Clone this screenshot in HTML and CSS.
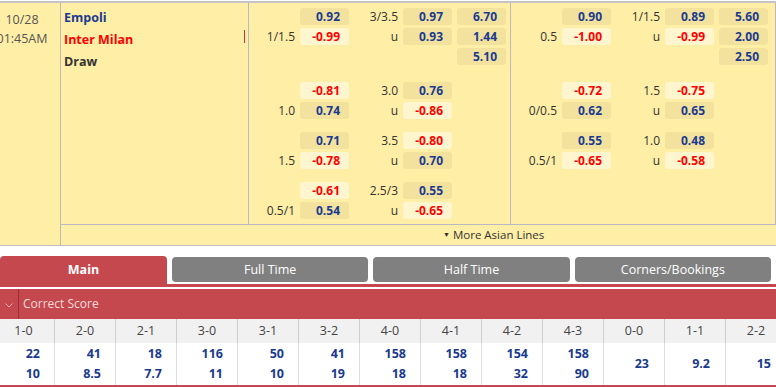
FILE: index.html
```html
<!DOCTYPE html>
<html>
<head>
    <title>Empoli vs Inter Milan - Odds</title>
    <link rel="stylesheet" href="styles.css">
</head>
<body>
    <div class="match">
        <div class="date">
            <span>10/28</span>
            <span>01:45AM</span>
        </div>
        <div class="markets">
            <div class="lines">
                <div class="teams">
                    <div class="team home">Empoli</div>
                    <div class="team away">Inter Milan<span class="mark"></span></div>
                    <div class="team draw">Draw</div>
                </div>

                <div class="block">
                    <div class="group first">
                        <span class="hdp"></span><span class="odd">0.92</span><span class="hdp">3/3.5</span><span class="odd">0.97</span><span class="odd x12">6.70</span>
                        <span class="hdp">1/1.5</span><span class="odd neg">-0.99</span><span class="hdp">u</span><span class="odd">0.93</span><span class="odd x12">1.44</span>
                        <span></span><span></span><span></span><span></span><span class="odd x12">5.10</span>
                    </div>
                    <div class="group">
                        <span class="hdp"></span><span class="odd neg">-0.81</span><span class="hdp">3.0</span><span class="odd">0.76</span><span></span>
                        <span class="hdp">1.0</span><span class="odd">0.74</span><span class="hdp">u</span><span class="odd neg">-0.86</span><span></span>
                    </div>
                    <div class="group">
                        <span class="hdp"></span><span class="odd">0.71</span><span class="hdp">3.5</span><span class="odd neg">-0.80</span><span></span>
                        <span class="hdp">1.5</span><span class="odd neg">-0.78</span><span class="hdp">u</span><span class="odd">0.70</span><span></span>
                    </div>
                    <div class="group">
                        <span class="hdp"></span><span class="odd neg">-0.61</span><span class="hdp">2.5/3</span><span class="odd">0.55</span><span></span>
                        <span class="hdp">0.5/1</span><span class="odd">0.54</span><span class="hdp">u</span><span class="odd neg">-0.65</span><span></span>
                    </div>
                </div>

                <div class="block half">
                    <div class="group first">
                        <span class="hdp"></span><span class="odd">0.90</span><span class="hdp">1/1.5</span><span class="odd">0.89</span><span class="odd x12">5.60</span>
                        <span class="hdp">0.5</span><span class="odd neg">-1.00</span><span class="hdp">u</span><span class="odd neg">-0.99</span><span class="odd x12">2.00</span>
                        <span></span><span></span><span></span><span></span><span class="odd x12">2.50</span>
                    </div>
                    <div class="group">
                        <span class="hdp"></span><span class="odd neg">-0.72</span><span class="hdp">1.5</span><span class="odd neg">-0.75</span><span></span>
                        <span class="hdp">0/0.5</span><span class="odd">0.62</span><span class="hdp">u</span><span class="odd">0.65</span><span></span>
                    </div>
                    <div class="group">
                        <span class="hdp"></span><span class="odd">0.55</span><span class="hdp">1.0</span><span class="odd">0.48</span><span></span>
                        <span class="hdp">0.5/1</span><span class="odd neg">-0.65</span><span class="hdp">u</span><span class="odd neg">-0.58</span><span></span>
                    </div>
                </div>
            </div>
            <div class="more"><span class="tri">&#9660;</span> More Asian Lines</div>
        </div>
    </div>

    <div class="tabs">
        <div class="tab active">Main</div>
        <div class="tab">Full Time</div>
        <div class="tab">Half Time</div>
        <div class="tab">Corners/Bookings</div>
    </div>

    <div class="section">
        <div class="toggle">
            <svg width="8" height="5" viewBox="0 0 8 5"><polyline points="0.5,0.5 4,4 7.5,0.5" fill="none" stroke="#eaa9ad" stroke-width="1"/></svg>
        </div>
        <div class="section-title">Correct Score</div>
    </div>

    <div class="scores">
        <div class="score-grid">
            <div class="sc-head">1-0</div>
            <div class="sc-head">2-0</div>
            <div class="sc-head">2-1</div>
            <div class="sc-head">3-0</div>
            <div class="sc-head">3-1</div>
            <div class="sc-head">3-2</div>
            <div class="sc-head">4-0</div>
            <div class="sc-head">4-1</div>
            <div class="sc-head">4-2</div>
            <div class="sc-head">4-3</div>
            <div class="sc-head">0-0</div>
            <div class="sc-head">1-1</div>
            <div class="sc-head">2-2</div>

            <div class="sc-val"><span>22</span><span>10</span></div>
            <div class="sc-val"><span>41</span><span>8.5</span></div>
            <div class="sc-val"><span>18</span><span>7.7</span></div>
            <div class="sc-val"><span>116</span><span>11</span></div>
            <div class="sc-val"><span>50</span><span>10</span></div>
            <div class="sc-val"><span>41</span><span>19</span></div>
            <div class="sc-val"><span>158</span><span>18</span></div>
            <div class="sc-val"><span>158</span><span>18</span></div>
            <div class="sc-val"><span>154</span><span>32</span></div>
            <div class="sc-val"><span>158</span><span>90</span></div>
            <div class="sc-val single"><span>23</span></div>
            <div class="sc-val single"><span>9.2</span></div>
            <div class="sc-val single"><span>15</span></div>
        </div>
    </div>
</body>
</html>
```

FILE: styles.css
```css
* {
    box-sizing: border-box;
}

body {
    margin: 0;
    background: #fff;
    font-family: 'Open Sans', 'Noto Sans', sans-serif;
    font-size: 12px;
    color: #333;
    overflow: hidden;
}

/* match row */

.match {
    display: flex;
    background: #ffeea6;
    margin-top: 1px;
    border-top: 2px solid #c4c4c8;
    border-bottom: 1px solid #bcbcc4;
}

.date {
    width: 61px;
    flex-shrink: 0;
    border-right: 1px solid #b9b9c1;
    display: flex;
    flex-direction: column;
    align-items: center;
    padding: 7px 16px 0 0;
    color: #555;
    font-size: 12.5px;
    line-height: 19px;
    white-space: nowrap;
}

.markets {
    flex: 1;
    display: flex;
    flex-direction: column;
}

.lines {
    display: flex;
    border-bottom: 1px solid #b9b9c1;
}

.teams {
    width: 188px;
    border-right: 1px solid #b9b9c1;
    padding-top: 3px;
}

.team {
    display: flex;
    height: 22px;
    align-items: center;
    padding-left: 3px;
    font-weight: bold;
    font-size: 12.5px;
}

.team.home {
    color: #1b3a8f;
}

.team.away {
    color: #ff0000;
}

.team.draw {
    color: #333;
}

.mark {
    width: 1px;
    height: 13px;
    background: #d0303a;
    margin: 2px 3px 0 auto;
    align-self: flex-start;
}

.block {
    width: 262px;
    border-right: 1px solid #b9b9c1;
    padding: 5px 0;
}

.block.half {
    width: 265px;
}

.group {
    display: grid;
    grid-template-columns: 51px 49px 54px 49px 54px;
    grid-auto-rows: 17px;
    row-gap: 3px;
    margin-bottom: 13px;
}

.group.first {
    margin-bottom: 17px;
}

.group:last-child {
    margin-bottom: 0;
}

.hdp {
    text-align: right;
    padding-right: 5px;
    line-height: 17px;
    color: #333;
}

.odd {
    background: #f2e29e;
    border-radius: 3px;
    text-align: right;
    padding-right: 9px;
    line-height: 17px;
    font-weight: bold;
    color: #1b3a8f;
}

.odd.neg {
    background: #fff6cf;
    color: #ff0000;
}

.odd.x12 {
    margin-left: 5px;
}

.more {
    height: 20px;
    line-height: 20px;
    padding-left: 382px;
    font-size: 11.5px;
    color: #333;
}

.more .tri {
    font-size: 7px;
    vertical-align: 2px;
}

/* tabs */

.tabs {
    display: flex;
    align-items: flex-start;
    gap: 5px;
    padding-right: 5px;
    margin-top: 10px;
    height: 31px;
    border-bottom: 3px solid #c4484e;
}

.tab {
    flex: 1;
    height: 25px;
    margin-top: 1px;
    line-height: 25px;
    text-align: center;
    background: #808080;
    color: #fff;
    border-radius: 4px;
    font-size: 12.5px;
}

.tab.active {
    flex: 0 0 167px;
    height: 28px;
    margin-top: 0;
    line-height: 28px;
    background: #c4484e;
    border-radius: 4px 4px 0 0;
    font-weight: bold;
}

/* correct score */

.section {
    display: flex;
    margin-top: 2px;
    height: 30px;
    background: #c4484e;
}

.toggle {
    width: 19px;
    border-right: 1px solid #9c2c34;
    display: flex;
    align-items: center;
    justify-content: center;
    padding-top: 2px;
}

.section-title {
    padding-left: 4px;
    line-height: 29px;
    color: #f8dcdc;
    font-size: 12px;
}

.scores {
    overflow: hidden;
    border-bottom: 2px solid #c4484e;
}

.score-grid {
    display: grid;
    grid-template-columns: 55px repeat(12, 61px);
    width: 787px;
}

.sc-head {
    height: 24px;
    line-height: 24px;
    background: #f1f1f1;
    border-right: 1px solid #cfcfcf;
    text-align: center;
    color: #444;
    font-size: 12.5px;
}

.sc-head:first-child {
    padding-right: 7px;
}

.sc-val {
    height: 42px;
    border-right: 1px solid #dcdcdc;
    display: flex;
    flex-direction: column;
    align-items: flex-end;
    justify-content: center;
    padding-right: 14px;
    line-height: 20px;
    font-weight: bold;
    font-size: 12.5px;
    color: #1b3a8f;
}

.sc-val.single {
    padding-right: 15px;
}
```
